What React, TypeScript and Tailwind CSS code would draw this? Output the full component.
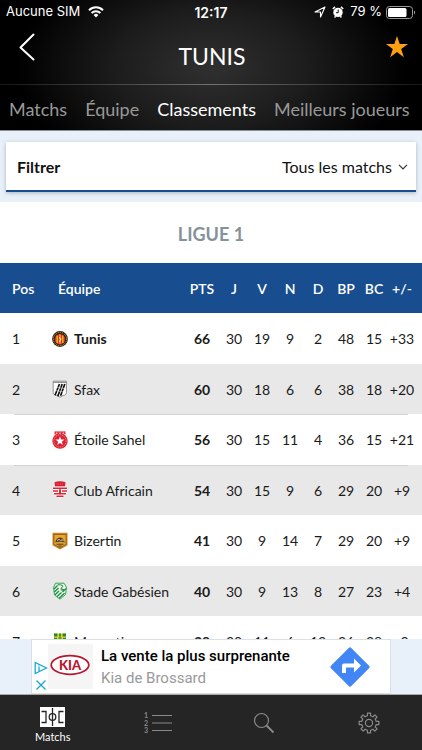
import type { ReactNode } from "react";

type Team = {
  name: string;
  badge: ReactNode;
  pts: number;
  stats: (number | string)[];
  bold?: boolean;
  divider?: boolean;
};

function TunisBadge() {
  return (
    <svg viewBox="0 0 16 18" className="h-[18px] w-4 shrink-0" aria-hidden>
      <circle cx="8" cy="9" r="7.9" fill="#2b2320" />
      <circle cx="8" cy="9" r="6.6" fill="none" stroke="#c9a227" strokeWidth="1" strokeDasharray="1.2 1" />
      <circle cx="8" cy="9.2" r="5.2" fill="#e0301e" />
      <path d="M5.2 5.5v7.4M8 4.2v9.6M10.8 5.5v7.4" stroke="#f6c12c" strokeWidth="1.3" />
      <path d="M7 7.5l2 1-1.4 3.5" stroke="#fff0b0" strokeWidth="1" fill="none" />
    </svg>
  );
}

function SfaxBadge() {
  return (
    <svg viewBox="0 0 16 18" className="h-[18px] w-4 shrink-0" aria-hidden>
      <path d="M1.2 1.2h13.2v11.5c0 1.8-1.6 2.6-3.4 2.9L8 17.2l-3.2-1.6c-2-.4-3.6-1.2-3.6-3z" fill="#fff" stroke="#777" strokeWidth="0.8" />
      <path d="M1.4 2.3h12.8" stroke="#8a8a8a" strokeWidth="1.2" />
      <path d="M7.5 4L3 15.2M10.200 4L5.800 16.2M12.800 4L8.600 15.8" stroke="#111" strokeWidth="1.700" />
      <path d="M5 7.2l7 1.4M4 10.5l7 1.4" stroke="#fff" strokeWidth="0.5" />
    </svg>
  );
}

function EtoileBadge() {
  return (
    <svg viewBox="0 0 16 18" className="h-[18px] w-4 shrink-0" aria-hidden>
      <path d="M2.5.4h11v3h-11z" fill="#e2303c" />
      <circle cx="8" cy="10" r="7.7" fill="#dd2233" />
      <path d="M4 2.2h1.4M7.3 2.2h1.4M10.6 2.2H12" stroke="#fff" strokeWidth="1" />
      <circle cx="8" cy="10" r="6.1" fill="none" stroke="#f6b6bb" strokeWidth="0.8" strokeDasharray="1 1" />
      <path d="M8 5.4l1.2 3.1 3.3.1-2.6 2.1.9 3.2L8 12.1l-2.8 1.8.9-3.2-2.6-2.1 3.3-.1z" fill="#fff" />
    </svg>
  );
}

function AfricainBadge() {
  return (
    <svg viewBox="0 0 16 18" className="h-[18px] w-4 shrink-0" aria-hidden>
      <path d="M2.5 1.2Q8-.6 13.5 1.2L13 5.2H3z" fill="#d81f30" />
      <path d="M1 6h14v4.5c0 3.5-3.5 5-7 7.2-3.5-2.2-7-3.7-7-7.2z" fill="#fff" />
      <path d="M1 7.2h14M1 10h5M10 10h5M2 12.8h12M4.5 15.2h7" stroke="#dc2636" strokeWidth="1.5" />
      <path d="M8 8.2v5" stroke="#dc2636" strokeWidth="2" />
      <path d="M4.5 3h7" stroke="#f08a92" strokeWidth="0.7" strokeDasharray="1 0.8" />
    </svg>
  );
}

function BizertinBadge() {
  return (
    <svg viewBox="0 0 16 18" className="h-[18px] w-4 shrink-0" aria-hidden>
      <path d="M.5.8h15v12.4L8 17.6.5 13.2z" fill="#c98118" />
      <path d="M2 2.5h12v9.8l-6 3.5-6-3.5z" fill="#eaa52f" stroke="#6e4a18" strokeWidth="0.6" />
      <path d="M3.3 10.5c.5-3 2-4.8 4.7-5 2.2.2 4 1.8 4.7 5-2-1-7.2-1-9.4 0z" fill="#4a3a28" />
      <path d="M5 8.8l2-1.6 1.5 1.3 2-.8 1 1.5" stroke="#f3dca8" strokeWidth="0.9" fill="none" />
      <path d="M4.5 12.2h7M6.5 14h3" stroke="#4a3a28" strokeWidth="1" />
    </svg>
  );
}

function GabesienBadge() {
  return (
    <svg viewBox="0 0 16 18" className="h-[18px] w-4 shrink-0" aria-hidden>
      <path d="M3.500 1.200h8.500l2.500 4-1 7.300L8 17.200 2.500 13 1.500 5.500z" fill="#e9f6ea" stroke="#1f9a43" strokeWidth="0.9" />
      <path d="M2 7l3.500-3.500M2.300 10L6.500 6M3 12.700l4-3.700M5 14.500l4.500-4M7 16.200l5.500-5M10.500 10l3.500-3.500" stroke="#168a38" strokeWidth="1.2" fill="none" />
      <path d="M5.500 3c2-.8 4.500 0 5.500 1.200L9 6.500l3 1.500H8.500" stroke="#168a38" strokeWidth="1" fill="none" />
    </svg>
  );
}

function MonastirBadge() {
  return (
    <svg viewBox="0 0 16 18" className="h-[18px] w-4 shrink-0" aria-hidden>
      <path d="M2 .5h12V13l-6 4.500L2 13z" fill="#f3d91c" />
      <path d="M2 .5h3.500v3H2zM10.500.5H14v3h-3.500zM7 .5h2v3H7z" fill="#1d8a3e" />
      <path d="M2 5.500h3M6.500 5h3M11 5.500h3M3 8h10" stroke="#1d8a3e" strokeWidth="1.4" />
    </svg>
  );
}

const columns = ["J", "V", "N", "D", "BP", "BC"];

const teams: Team[] = [
  { name: "Tunis", badge: <TunisBadge />, pts: 66, stats: [30, 19, 9, 2, 48, 15, "+33"], bold: true },
  { name: "Sfax", badge: <SfaxBadge />, pts: 60, stats: [30, 18, 6, 6, 38, 18, "+20"] },
  { name: "Étoile Sahel", badge: <EtoileBadge />, pts: 56, stats: [30, 15, 11, 4, 36, 15, "+21"], divider: true },
  { name: "Club Africain", badge: <AfricainBadge />, pts: 54, stats: [30, 15, 9, 6, 29, 20, "+9"], divider: true },
  { name: "Bizertin", badge: <BizertinBadge />, pts: 41, stats: [30, 9, 14, 7, 29, 20, "+9"] },
  { name: "Stade Gabésien", badge: <GabesienBadge />, pts: 40, stats: [30, 9, 13, 8, 27, 23, "+4"] },
  { name: "Monastir", badge: <MonastirBadge />, pts: 39, stats: [30, 11, 6, 13, 26, 28, "-2"] },
];

// hairline along the top of a row, inset on both sides
const dividerClass =
  "bg-[linear-gradient(to_right,transparent_14px,#d0d3d3_14px,#d0d3d3_calc(100%-14px),transparent_calc(100%-14px))] bg-[length:100%_1px] bg-no-repeat";

// Outline of an eight-toothed cog, centred on 11,11
const gearPath =
  Array.from({ length: 8 }, (_, i) => {
    const at = (r: number, deg: number) => {
      const a = ((i * 45 + deg) * Math.PI) / 180;
      return `${(11 + r * Math.sin(a)).toFixed(2)} ${(11 - r * Math.cos(a)).toFixed(2)}`;
    };
    return `${i === 0 ? "M" : "L"}${at(7.4, -12)}L${at(10, -9)}L${at(10, 9)}L${at(7.4, 12)}`;
  }).join("") + "Z";

function StatusBar() {
  return (
    <div className="flex h-6 items-center px-1.5 font-['Inter',sans-serif] text-[13px]">
      <div className="flex flex-1 items-center gap-2">
        <span>Aucune SIM</span>
        <svg viewBox="0 0 16 12" className="h-3 w-4" fill="none" stroke="white" strokeWidth="2" aria-hidden>
          <path d="M1 4.2a10 10 0 0 1 14 0M3.600 7a6.300 6.300 0 0 1 8.800 0" />
          <path d="M5.600 9a3.500 3.500 0 0 1 4.800 0L8 11.500z" fill="white" stroke="none" />
        </svg>
      </div>
      <span className="text-[14px] font-semibold">12:17</span>
      <div className="flex flex-1 items-center justify-end gap-1.5">
        <svg viewBox="0 0 12 12" className="size-3" fill="none" stroke="white" strokeWidth="1.1" strokeLinejoin="round" aria-hidden>
          <path d="M1 6l10-5-4.500 10V6z" />
        </svg>
        <svg viewBox="0 0 12 12" className="size-3" aria-hidden>
          <circle cx="6" cy="6.400" r="4.700" fill="white" />
          <path d="M.8 3L3 .9M11.200 3L9 .9M2.600 11.500l1-1.200M9.400 11.500l-1-1.200" stroke="white" strokeWidth="1.5" />
          <path d="M6.200 3.500v3.200H4" stroke="#111" strokeWidth="1" fill="none" />
        </svg>
        <span>79 %</span>
        <svg viewBox="0 0 30 13" className="-ml-0.5 h-[13px] w-[30px]" aria-hidden>
          <rect x="0.5" y="0.5" width="26" height="12" rx="3" fill="none" stroke="#9a9a9a" />
          <rect x="2" y="2" width="18.5" height="9" rx="1.5" fill="white" />
          <path d="M28 4.500c1.400.6 1.400 3.400 0 4z" fill="#9a9a9a" />
        </svg>
      </div>
    </div>
  );
}

function Header() {
  return (
    <header className="h-[130px] shrink-0 bg-black bg-[radial-gradient(ellipse_46%_90%_at_50%_52%,#303030_0%,#1c1c1c_50%,#000_100%)] text-white">
      <StatusBar />
      <div className="flex h-[60px] items-start justify-between pr-[7px] pl-[9px]">
        <button aria-label="Retour" className="flex h-[46px] w-9 items-center justify-center">
          <svg viewBox="0 0 16 28" className="h-7 w-4" fill="none" stroke="white" strokeWidth="2" strokeLinecap="round" strokeLinejoin="round" aria-hidden>
            <path d="M14.500 1.500L1.500 14.500l13 12" />
          </svg>
        </button>
        <h1 className="pt-4 text-[23px] leading-8">TUNIS</h1>
        <button aria-label="Favori" className="flex h-[46px] w-9 items-center justify-center">
          <svg viewBox="0 0 22 22" className="size-[22px]" fill="#ffa012" aria-hidden>
            <path d="M11 0l2.700 8.100H22l-6.800 4.900 2.600 8.200L11 16.100l-6.800 5.100L6.800 13 0 8.100h8.300z" />
          </svg>
        </button>
      </div>
      <div className="h-px bg-linear-to-r from-neutral-900 via-neutral-500 to-neutral-900" />
      <nav className="flex h-[45px] items-center gap-[18px] pt-1 pl-[9px] text-[18px] whitespace-nowrap text-[#999]">
        <a href="#matchs">Matchs</a>
        <a href="#equipe">Équipe</a>
        <a href="#classements" className="text-white" aria-current="page">Classements</a>
        <a href="#joueurs">Meilleurs joueurs</a>
      </nav>
    </header>
  );
}

function Filter() {
  return (
    <div className="border-t border-[#8b8e99] bg-[#e8f0fa] px-1.5 pt-[11px] pb-2.5">
      <div className="flex h-[50px] items-center justify-between border-b-2 border-[#184e90] bg-white pt-0.5 pr-2 pl-[11px] text-[16px] text-[#111] shadow-[0_1px_4px_rgba(0,0,0,0.25)]">
        <label htmlFor="filter" className="font-bold">Filtrer</label>
        <div className="relative">
          <select id="filter" className="appearance-none bg-transparent pr-4">
            <option>Tous les matchs</option>
          </select>
          <svg viewBox="0 0 10 6" className="pointer-events-none absolute top-1/2 right-0 h-1.5 w-2.5 -translate-y-1/2" fill="none" stroke="#333" strokeWidth="1.2" aria-hidden>
            <path d="M1 .8L5 4.800 9 .8" />
          </svg>
        </div>
      </div>
    </div>
  );
}

function Standings() {
  return (
    <table className="w-full table-fixed text-[14px] text-[#1a1a1a]">
      <caption className="h-[61px] pt-0.5 text-[18px] leading-[60px] font-bold text-[#84929a]">LIGUE 1</caption>
      <colgroup>
        <col className="w-[52px]" />
        <col />
        <col className="w-9" />
        {columns.map((c) => (
          <col key={c} className="w-7" />
        ))}
        <col className="w-[34px]" />
      </colgroup>
      <thead className="bg-[#184e90] text-white">
        <tr className="h-[50px]">
          <th className="pl-3 text-left font-semibold">Pos</th>
          <th className="pl-1.5 text-left font-semibold">Équipe</th>
          <th className="font-semibold">PTS</th>
          {columns.map((c) => (
            <th key={c} className="font-semibold">{c}</th>
          ))}
          <th className="pr-1.5 font-semibold">+/-</th>
        </tr>
      </thead>
      <tbody className="text-center">
        {teams.map((team, i) => (
          <tr
            key={team.name}
            className={`odd:h-[51px] even:h-[50px] even:bg-[#e8e8e8] ${team.divider ? dividerClass : ""}`}
          >
            <td className="pl-3 text-left">{i + 1}</td>
            <td>
              <div className={`flex items-center gap-1.5 whitespace-nowrap ${team.bold ? "font-bold" : ""}`}>
                {team.badge}
                {team.name}
              </div>
            </td>
            <td className="font-bold">{team.pts}</td>
            {team.stats.map((value, n) => (
              <td key={n} className="last:pr-1.5">{value}</td>
            ))}
          </tr>
        ))}
      </tbody>
    </table>
  );
}

function AdBanner() {
  return (
    <aside className="flex h-14 shrink-0 justify-center border-b border-[#aaa] bg-[#e8f0fa]">
      <a href="#kia" className="flex w-[360px] items-center border border-[#dcdfe3] bg-white pl-0.5 font-['Roboto',sans-serif]">
        <svg viewBox="0 0 14 32" className="h-8 w-3.5 self-end" fill="none" stroke="#14a9cf" strokeWidth="1.3" aria-hidden>
          <path d="M1.200 1.500v11L12.500 7zM5 5.500v4.500M5 3.600v.8" />
          <path d="M2.500 19.500l9 9M11.500 19.500l-9 9" />
        </svg>
        <svg viewBox="0 0 45 45" className="size-[45px]" aria-hidden>
          <rect width="45" height="45" fill="#f5f5f5" />
          <ellipse cx="22" cy="21" rx="18.8" ry="9.3" fill="#fff" stroke="#b8152e" strokeWidth="1.7" />
          <text x="22" y="25.5" textAnchor="middle" fontFamily="Lato" fontWeight="900" fontSize="13" fill="#b8152e">KIA</text>
        </svg>
        <div className="flex-1 pl-2 text-[15px] leading-[22px] whitespace-nowrap">
          <p className="font-medium text-black">La vente la plus surprenante</p>
          <p className="text-[#999]">Kia de Brossard</p>
        </div>
        <svg viewBox="0 0 40 40" className="mr-5 size-10" aria-hidden>
          <path d="M18.500 1.200a2 2 0 0 1 3 0l17.300 17.300a2 2 0 0 1 0 3L21.500 38.800a2 2 0 0 1-3 0L1.200 21.500a2 2 0 0 1 0-3z" fill="#4285f4" />
          <path d="M12 26V18.500a2 2 0 0 1 2-2h10V11.500l7 7-7 7v-5h-8V26z" fill="#fff" />
        </svg>
      </a>
    </aside>
  );
}

function TabBar() {
  return (
    <nav className="grid h-[55px] shrink-0 grid-cols-4 bg-[#252525] text-[#8a8a8a]">
      <a href="#home" className="flex flex-col items-center justify-center gap-0.5 pt-1.5 text-[11px] leading-4 text-white">
        <svg viewBox="0 0 25 20" className="h-5 w-[25px]" aria-hidden>
          <rect width="25" height="20" fill="#fff" />
          <path d="M1.500 4.500h4.500v11H1.500M23.500 4.500H19v11h4.500M12.500 1v18" fill="none" stroke="#252525" strokeWidth="1.3" />
          <circle cx="12.5" cy="10" r="3.3" fill="none" stroke="#252525" strokeWidth="1.3" />
        </svg>
        Matchs
      </a>
      <a href="#standings" aria-label="Classements" className="flex items-center justify-center">
        <svg viewBox="0 0 28 22" className="h-[22px] w-7" fill="currentColor" aria-hidden>
          <g fontFamily="Lato" fontSize="7" fontWeight="700">
            <text x="0" y="6">1</text>
            <text x="0" y="13.5">2</text>
            <text x="0" y="21">3</text>
          </g>
          <path d="M8 3.500h20M8 11h20M8 18.500h20" stroke="currentColor" />
        </svg>
      </a>
      <a href="#search" aria-label="Rechercher" className="flex items-center justify-center">
        <svg viewBox="0 0 22 22" className="size-[22px]" fill="none" stroke="currentColor" strokeWidth="1.2" aria-hidden>
          <circle cx="8.5" cy="8.5" r="7" />
          <path d="M13.500 13.500l7 7" strokeWidth="1.8" />
        </svg>
      </a>
      <a href="#settings" aria-label="Réglages" className="flex items-center justify-center">
        <svg viewBox="0 0 22 22" className="size-[22px]" fill="none" stroke="currentColor" strokeWidth="1.2" strokeLinejoin="round" aria-hidden>
          <path d={gearPath} />
          <circle cx="11" cy="11" r="3.6" />
        </svg>
      </a>
    </nav>
  );
}

export default function App() {
  return (
    <div className="flex h-screen flex-col overflow-hidden bg-white font-['Lato',sans-serif]">
      <Header />
      <main className="min-h-0 flex-1 overflow-hidden">
        <Filter />
        <Standings />
      </main>
      <AdBanner />
      <TabBar />
    </div>
  );
}
